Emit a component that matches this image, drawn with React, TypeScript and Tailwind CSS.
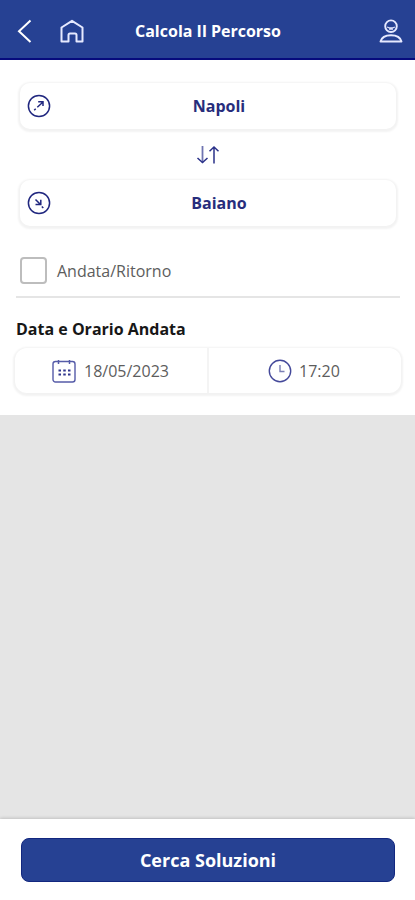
import { useState } from 'react';

interface StopFieldProps {
    label: string;
    direction: 'from' | 'to';
}

function BackIcon() {
    return (
        <svg width="16" height="26" viewBox="0 0 16 26" fill="none" stroke="white" strokeWidth="2">
            <path d="M14.5 2.5 3 13.2 14.5 24" />
        </svg>
    );
}

function HomeIcon() {
    return (
        <svg width="26" height="26" viewBox="0 0 26 26" fill="none" stroke="#e6e9ff" strokeWidth="2" strokeLinejoin="round">
            <path d="M2.5 9.500 13 2.800 23.500 9.500V23.500H17.500V17a1.500 1.500 0 0 0-1.500-1.500h-5A1.500 1.500 0 0 0 9.500 17v6.500H2.500Z" />
        </svg>
    );
}

function UserIcon() {
    return (
        <svg width="24" height="26" viewBox="0 0 24 26" fill="none" stroke="#e6e9ff" strokeWidth="1.9" strokeLinejoin="round">
            <circle cx="12" cy="8.2" r="5.8" />
            <path d="M8.200 8.800c1.200 1.500 6.400 1.500 7.600 0M10 11.200h4" strokeWidth="1.200" />
            <path d="M1.500 23.500c1-4 4.700-6.300 10.500-6.300s9.500 2.300 10.500 6.300Z" />
        </svg>
    );
}

function DirectionIcon({ direction }: { direction: 'from' | 'to' }) {
    return (
        <svg width="24" height="24" viewBox="0 0 24 24" fill="none" stroke="#20277f" strokeWidth="1.5">
            <circle cx="12" cy="12" r="10.6" />
            {direction === 'from' ? (
                <path d="m7.200 16.300 1.500-1.500M10.300 13.200l5.200-4.700M11.200 7.800h4.800v4.200" />
            ) : (
                <path d="m8.500 8.500 5 5M8.500 13.500h5.300V8.800M14.800 15.500l1.500 1.500" />
            )}
        </svg>
    );
}

function SwapIcon() {
    return (
        <svg width="24" height="20" viewBox="0 0 24 20" fill="none" stroke="#2a3189" strokeWidth="1.5">
            <path d="M6.500 1v16.500" stroke="#6f74b1" strokeWidth="1.800" />
            <path d="M1.500 13l5 4.500 5-4.500" />
            <path d="M18 18.500V2M13.500 6.300 18 2l4.500 4.300" />
        </svg>
    );
}

function CalendarIcon() {
    return (
        <svg width="24" height="24" viewBox="0 0 24 24" fill="none" stroke="#555ba8" strokeWidth="1.4">
            <rect x="1" y="2.500" width="22" height="20.500" rx="2.500" />
            <path d="M6.500 1v4M17.500 1v4" strokeWidth="1.500" />
            <path d="M6.500 11.500h12M6.500 15.500h12" stroke="#30368d" strokeWidth="1.800" strokeDasharray="2.500 2.250" />
        </svg>
    );
}

function ClockIcon() {
    return (
        <svg width="24" height="24" viewBox="0 0 24 24" fill="none" stroke="#44499a" strokeWidth="1.4">
            <circle cx="12" cy="12" r="10.7" />
            <path d="M12 6v6.500h4.500" stroke="#7b7fb5" />
        </svg>
    );
}

function StopField({ label, direction }: StopFieldProps) {
    return (
        <button className="flex h-[46px] w-full items-center rounded-[10px] bg-white pl-[7px] shadow-[0_1px_2px_2px_rgba(0,0,0,0.05)]">
            <DirectionIcon direction={direction} />
            <span className="flex-1 pr-[9px] text-center text-[16px] font-bold text-[#272d7c]">{label}</span>
        </button>
    );
}

export default function App() {
    const [stops, setStops] = useState(['Napoli', 'Baiano']);
    const [roundTrip, setRoundTrip] = useState(false);

    return (
        <div className="flex h-[900px] w-[415px] flex-col overflow-hidden bg-[#e5e5e5] font-['Open_Sans',sans-serif]">
            {/* Header */}
            <header className="flex h-[60px] shrink-0 items-center border-b-2 border-[#060b7d] bg-[#264193] pt-[3px]">
                <button className="ml-[16px]"><BackIcon /></button>
                <button className="ml-[27px]"><HomeIcon /></button>
                <h1 className="flex-1 pl-[50px] text-left text-[16px] font-bold whitespace-nowrap text-white">Calcola Il Percorso</h1>
                <button className="mr-[12px]"><UserIcon /></button>
            </header>

            {/* Search form */}
            <main className="h-[355px] shrink-0 bg-white pt-[23px]">
                <div className="ml-[20px] w-[376px]">
                    <StopField label={stops[0]} direction="from" />
                    <button
                        className="flex h-[51px] w-full items-center justify-center"
                        onClick={() => setStops(([from, to]) => [to, from])}
                    >
                        <SwapIcon />
                    </button>
                    <StopField label={stops[1]} direction="to" />
                </div>

                <label className="mt-[31px] ml-[20px] flex h-[27px] items-center gap-[10px]">
                    <input
                        type="checkbox"
                        className="size-[27px] appearance-none rounded-[4px] border-2 border-[#bdbdbd] bg-white checked:bg-[#264193]"
                        checked={roundTrip}
                        onChange={(e) => setRoundTrip(e.target.checked)}
                    />
                    <span className="text-[16px] text-[#5d5d5d]">Andata/Ritorno</span>
                </label>
                <div className="mt-[12px] ml-[16px] h-[2px] w-[384px] bg-[#e5e5e5]" />

                <h2 className="mt-[19px] ml-[16px] text-[16px] leading-6 font-bold text-[#171717]">Data e Orario Andata</h2>
                <div className="mt-[7px] ml-[15px] flex h-[45px] w-[386px] rounded-[12px] bg-white text-[16px] text-[#5d5d5d] shadow-[0_1px_2px_2px_rgba(0,0,0,0.05)]">
                    <button className="flex w-[194px] items-center gap-[8px] border-r-2 border-[#f4f4f4] pl-[37px]">
                        <CalendarIcon />
                        18/05/2023
                    </button>
                    <button className="flex flex-1 items-center gap-[7px] pl-[59px]">
                        <ClockIcon />
                        17:20
                    </button>
                </div>
            </main>

            {/* Submit bar */}
            <footer className="mt-auto h-[81px] shrink-0 bg-white pt-[19px] shadow-[0_-1px_3px_rgba(0,0,0,0.16)]">
                <button className="ml-[21px] h-[44px] w-[374px] rounded-[8px] border border-[#12277f] bg-[#264193] text-[18px] font-bold text-white">
                    Cerca Soluzioni
                </button>
            </footer>
        </div>
    );
}
